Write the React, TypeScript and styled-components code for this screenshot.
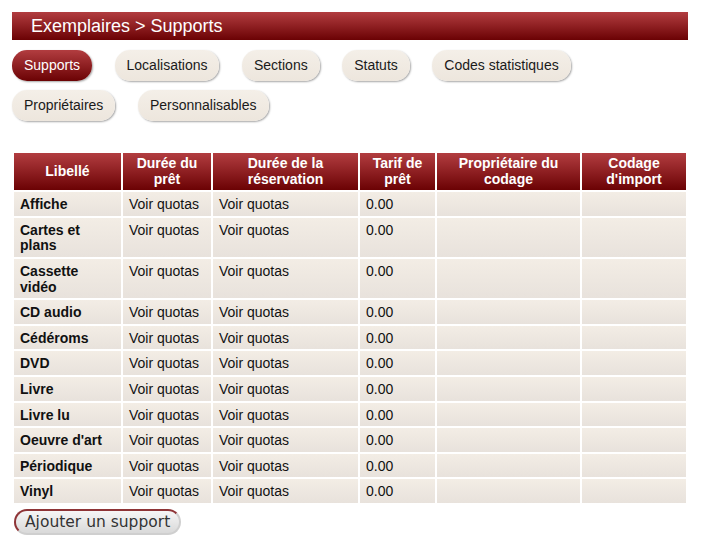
import React from "react";
import styled, { createGlobalStyle } from "styled-components";

interface Support {
  label: string;
  loan: string;
  booking: string;
  price: string;
  owner: string;
  importCode: string;
}

const tabs = [
  "Supports",
  "Localisations",
  "Sections",
  "Statuts",
  "Codes statistiques",
  "Propriétaires",
  "Personnalisables",
];

const labels = [
  "Affiche",
  "Cartes et plans",
  "Cassette vidéo",
  "CD audio",
  "Cédéroms",
  "DVD",
  "Livre",
  "Livre lu",
  "Oeuvre d'art",
  "Périodique",
  "Vinyl",
];

const supports: Support[] = labels.map((label) => ({
  label,
  loan: "Voir quotas",
  booking: "Voir quotas",
  price: "0.00",
  owner: "",
  importCode: "",
}));

const columns = [
  { title: "Libellé", width: 107 },
  { title: "Durée du prêt", width: 88 },
  { title: "Durée de la réservation", width: 145 },
  { title: "Tarif de prêt", width: 75 },
  { title: "Propriétaire du codage", width: 143 },
  { title: "Codage d'import", width: 104 },
];

export default function App() {
  return (
    <>
      <GlobalStyle />
      <Page>
        <TitleBar>Exemplaires &gt; Supports</TitleBar>
        <TabList>
          {tabs.map((tab, i) => (
            <Tab key={tab} $active={i === 0}>
              {tab}
            </Tab>
          ))}
        </TabList>
        <Table>
          <colgroup>
            {columns.map((c) => (
              <col key={c.title} style={{ width: c.width }} />
            ))}
          </colgroup>
          <thead>
            <tr>
              {columns.map((c) => (
                <HeadCell key={c.title}>{c.title}</HeadCell>
              ))}
            </tr>
          </thead>
          <tbody>
            {supports.map((s) => (
              <tr key={s.label}>
                <LabelCell>{s.label}</LabelCell>
                <Cell>{s.loan}</Cell>
                <Cell>{s.booking}</Cell>
                <Cell>{s.price}</Cell>
                <Cell>{s.owner}</Cell>
                <Cell>{s.importCode}</Cell>
              </tr>
            ))}
          </tbody>
        </Table>
        <AddButton type="button">Ajouter un support</AddButton>
      </Page>
    </>
  );
}

const GlobalStyle = createGlobalStyle`
  body {
    margin: 0;
    background: #fff;
    font-family: "Liberation Sans", Arial, sans-serif;
  }
`;

const Page = styled.div`
  width: 676px;
  padding: 12px;
`;

const TitleBar = styled.h1`
  margin: 0;
  height: 28px;
  line-height: 28px;
  padding-left: 19px;
  font-size: 18px;
  font-weight: normal;
  color: #fff;
  background: linear-gradient(#b23d40, #6b0204);
`;

const TabList = styled.div`
  display: flex;
  flex-wrap: wrap;
  gap: 9px 22.5px;
  margin-top: 10px;
`;

const Tab = styled.div<{ $active?: boolean }>`
  height: 31px;
  line-height: 31px;
  padding: 0 12px;
  border-radius: 15px;
  font-size: 14px;
  color: ${(p) => (p.$active ? "#fff" : "#1a1a1a")};
  background: ${(p) =>
    p.$active
      ? "linear-gradient(#b23d40, #6b0204)"
      : "linear-gradient(#f4efe8, #ede6dd)"};
  box-shadow: 1px 1px 2px rgba(0, 0, 0, 0.35);
`;

const Table = styled.table`
  width: 676px;
  margin-top: 30px;
  table-layout: fixed;
  border-collapse: separate;
  border-spacing: 2px;
  font-size: 14px;
  color: #111;
`;

const HeadCell = styled.th`
  padding: 3px 6px;
  line-height: 15.6px;
  font-weight: bold;
  color: #fff;
  text-align: center;
  vertical-align: middle;
  background: linear-gradient(#b23d40, #6b0204);
`;

const Cell = styled.td`
  padding: 5px 6px 3px;
  line-height: 15.6px;
  vertical-align: top;
  background: linear-gradient(#f3ede5, #e8e2dc);
`;

const LabelCell = styled(Cell)`
  font-weight: bold;
`;

const AddButton = styled.button`
  display: block;
  margin: 4px 0 0 2px;
  height: 26px;
  padding: 0 9px;
  font-family: "DejaVu Sans", sans-serif;
  font-size: 15.5px;
  color: #333;
  border-radius: 13px;
  border: 2px solid;
  border-color: #8e3436 #cfcfcf #cfcfcf #8e3436;
  background: linear-gradient(#f6f6f6, #d9d9d9);
`;
